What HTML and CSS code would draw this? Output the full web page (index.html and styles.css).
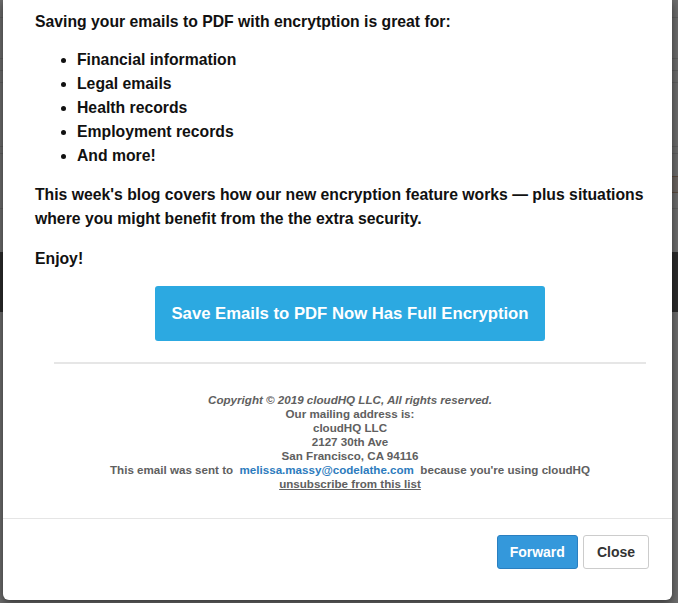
FILE: index.html
```html
<!DOCTYPE html>
<html lang="en">
<head>
  <meta charset="UTF-8" />
  <meta name="viewport" content="width=device-width, initial-scale=1.0"/>
  <title>Newsletter preview | cloudHQ</title>
  <link rel="stylesheet" href="styles.css">
</head>
<body>
  <div class="page-behind">
    <div class="line h17"></div>
    <div class="line h40"></div>
    <div class="line h11"></div>
    <div class="line h11"></div>
    <div class="line h63"></div>
    <div class="line h6"></div>
    <div class="line h54 with-box"><span class="field"></span></div>
    <div class="spacer"></div>
    <div class="dark-bar"></div>
  </div>

  <div class="modal">
    <div class="modal-body">
      <div class="email">
        <p class="first">Saving your emails to PDF with encrytption is great for:</p>
        <ul class="uses">
          <li>Financial information</li>
          <li>Legal emails</li>
          <li>Health records</li>
          <li>Employment records</li>
          <li>And more!</li>
        </ul>
        <p class="blog">This week's blog covers how our new encryption feature works — plus situations where you might benefit from the the extra security.</p>
        <p class="enjoy">Enjoy!</p>

        <div class="cta-wrap">
          <a class="cta" href="#">Save Emails to PDF Now Has Full Encryption</a>
        </div>

        <hr class="divider">

        <div class="mail-footer">
          <em>Copyright © 2019 cloudHQ LLC, All rights reserved.</em><br>
          Our mailing address is:<br>
          cloudHQ LLC<br>
          2127 30th Ave<br>
          San Francisco, CA 94116<br>
          This email was sent to &nbsp;<a class="mail-link" href="#">melissa.massy@codelathe.com</a>&nbsp; because you're using cloudHQ<br>
          <a class="unsub" href="#">unsubscribe from this list</a>
        </div>
      </div>
    </div>
    <div class="modal-footer">
      <button class="btn btn-primary">Forward</button>
      <button class="btn btn-default">Close</button>
    </div>
  </div>
</body>
</html>
```

FILE: styles.css
```css
body {
  margin: 0;
  padding: 0;
  font-family: 'Liberation Sans', Arial, Helvetica, sans-serif;
  background: #6c6c6c;
  color: #111;
  height: 603px;
  overflow: hidden;
}

/* the app page dimmed behind the dialog */
.line {
  border-bottom: 1px solid #5f5f5f;
}

.h6 { height: 6px; }
.h11 { height: 11px; }
.h17 { height: 17px; }
.h40 { height: 40px; }
.h54 { height: 54px; }
.h63 { height: 63px; }

.with-box {
  display: flex;
  justify-content: flex-end;
  align-items: flex-start;
}

.field {
  width: 14px;
  height: 15px;
  margin-top: 22px;
  border: 1px solid #5a4a3e;
  border-right: none;
  background: #6a6460;
}

.spacer {
  height: 43px;
}

.dark-bar {
  height: 60px;
  background: #2b2b2b;
}

.modal {
  position: absolute;
  top: 0;
  left: 3px;
  width: 669px;
  height: 600px;
  background: #fff;
  border-radius: 0 0 6px 6px;
  box-shadow: 0 3px 9px rgba(0,0,0,0.5);
  display: flex;
  flex-direction: column;
}

.modal-body {
  height: 518px;
  border-bottom: 1px solid #e5e5e5;
  padding: 0 7px 0 32px;
  overflow: hidden;
}

.email {
  width: 630px;
  font-size: 15.75px;
  font-weight: bold;
  line-height: 24px;
}

.email p {
  margin: 0 0 16px;
}

.email p.first {
  margin: 10px 0 14px;
}

.uses {
  margin: 0 0 15px;
  padding-left: 42px;
}

.email p.blog {
  margin-top: 1px;
}

.email p.enjoy {
  margin: 0 0 15px;
}

.cta-wrap {
  text-align: center;
}

.cta {
  display: inline-block;
  background: #2ca9e1;
  color: #fff;
  text-decoration: none;
  font-size: 16.7px;
  line-height: 21px;
  padding: 17px 16px;
  border-radius: 3px;
}

.divider {
  border: none;
  border-top: 2px solid #e6e6e6;
  margin: 21px 19px 0;
}

.mail-footer {
  margin-top: 29px;
  text-align: center;
  font-size: 11.6px;
  line-height: 14px;
  color: #606060;
}

.mail-link {
  color: #2c7bbd;
  text-decoration: none;
}

.unsub {
  color: #606060;
}

.modal-footer {
  display: flex;
  justify-content: flex-end;
  gap: 5px;
  padding: 16px 23px 0;
}

.btn {
  font-family: 'Liberation Sans', Arial, sans-serif;
  font-size: 14px;
  font-weight: bold;
  height: 34px;
  padding: 0 13px;
  border-radius: 3px;
  cursor: pointer;
}

.btn-primary {
  background: #3498db;
  border: 1px solid #2a7fc0;
  color: #fff;
  padding: 0 12px;
}

.btn-default {
  background: #fff;
  border: 1px solid #ccc;
  color: #333;
}
```
